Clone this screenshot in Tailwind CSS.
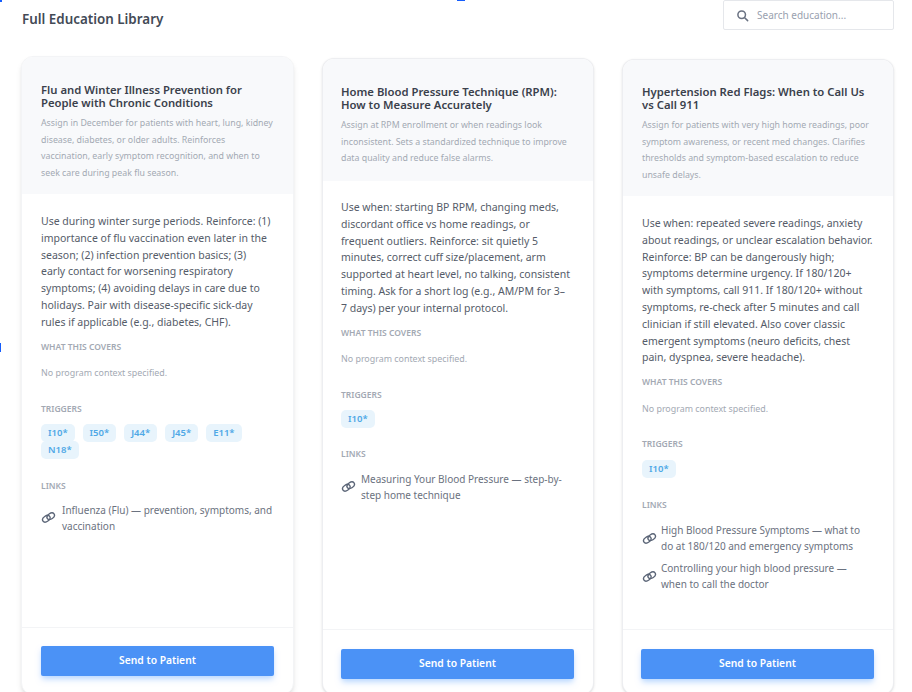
<!DOCTYPE html>
<html lang="en">
<head>
  <meta charset="UTF-8" />
  <title>Full Education Library</title>
  <script src="https://cdn.jsdelivr.net/npm/@tailwindcss/browser@4"></script>
</head>
<body class="bg-white text-gray-700 font-['Noto_Sans',sans-serif] h-[692px] overflow-hidden relative">
  <!-- stray focus marks at the screenshot edges -->
  <div class="absolute left-0 top-0 w-[2px] h-[2px] bg-blue-600"></div>
  <div class="absolute left-[457px] top-0 w-[8px] h-[1px] bg-blue-600"></div>
  <div class="absolute left-0 top-[343px] w-[1px] h-[9px] bg-blue-600"></div>

  <header class="flex justify-between items-start pl-[22px] pr-[18px] h-[56px]">
    <h1 class="mt-[10px] text-[13.4px] leading-[19px] font-semibold text-[#434a56]">Full Education Library</h1>
    <div class="flex items-center w-[171px] h-[30px] bg-white border border-gray-200 rounded-[2px] pl-[12px] gap-[8px]">
      <svg class="w-[13px] h-[13px] text-gray-500" viewBox="0 0 24 24" fill="none" stroke="currentColor" stroke-width="2.8" stroke-linecap="round"><circle cx="10.5" cy="10.5" r="7"/><path d="M16 16l5.5 5.5"/></svg>
      <span class="text-[10px] text-gray-400">Search education...</span>
    </div>
  </header>

  <main class="grid grid-cols-[273px_272px_272px] gap-x-[28px] pl-[21px] items-start">
    <!-- Card 1 -->
    <article class="h-[639px] flex flex-col bg-white border border-gray-100 rounded-xl shadow-md overflow-hidden">
      <div class="h-[137px] bg-[#f8f9fb] pt-[26px] px-[19px]">
        <h2 class="text-[11.3px] leading-[13px] font-semibold text-[#3b414c]">Flu and Winter Illness Prevention for People with Chronic Conditions</h2>
        <p class="mt-[6px] text-[8.8px] leading-[16.5px] text-[#a3a9b3] whitespace-nowrap">Assign in December for patients with heart, lung, kidney<br>disease, diabetes, or older adults. Reinforces<br>vaccination, early symptom recognition, and when to<br>seek care during peak flu season.</p>
      </div>
      <div class="flex-1 px-[19px] pt-[19px]">
        <p class="text-[10.5px] leading-[16.8px] text-[#555c69] whitespace-nowrap">Use during winter surge periods. Reinforce: (1)<br>importance of flu vaccination even later in the<br>season; (2) infection prevention basics; (3)<br>early contact for worsening respiratory<br>symptoms; (4) avoiding delays in care due to<br>holidays. Pair with disease-specific sick-day<br>rules if applicable (e.g., diabetes, CHF).</p>
        <h3 class="mt-[9px] text-[8.5px] leading-[13px] font-semibold uppercase text-[#a3a9b3]">What this covers</h3>
        <p class="mt-[13px] text-[8.9px] leading-[14px] text-[#a3a9b3]">No program context specified.</p>
        <h3 class="mt-[22px] text-[8.5px] leading-[13px] font-semibold uppercase text-[#a3a9b3]">Triggers</h3>
        <div class="mt-[9px] flex flex-wrap gap-x-[8px] w-[215px]">
          <span class="h-[18px] px-[7px] rounded-[5px] bg-[#e8f4fc] text-[9.5px] leading-[18px] font-semibold text-[#4fa8e6]">I10*</span>
          <span class="h-[18px] px-[7px] rounded-[5px] bg-[#e8f4fc] text-[9.5px] leading-[18px] font-semibold text-[#4fa8e6]">I50*</span>
          <span class="h-[18px] px-[7px] rounded-[5px] bg-[#e8f4fc] text-[9.5px] leading-[18px] font-semibold text-[#4fa8e6]">J44*</span>
          <span class="h-[18px] px-[7px] rounded-[5px] bg-[#e8f4fc] text-[9.5px] leading-[18px] font-semibold text-[#4fa8e6]">J45*</span>
          <span class="h-[18px] px-[7px] rounded-[5px] bg-[#e8f4fc] text-[9.5px] leading-[18px] font-semibold text-[#4fa8e6]">E11*</span>
          <span class="h-[18px] px-[7px] -mt-px rounded-[5px] bg-[#e8f4fc] text-[9.5px] leading-[18px] font-semibold text-[#4fa8e6]">N18*</span>
        </div>
        <h3 class="mt-[20px] text-[8.5px] leading-[13px] font-semibold uppercase text-[#a3a9b3]">Links</h3>
        <div class="mt-[10px] flex items-center gap-[6px] text-[10px] leading-[16px] text-[#6b7280] whitespace-nowrap">
          <svg class="w-[15px] h-[15px] shrink-0 text-[#5b6577]" viewBox="0 0 24 24" fill="none" stroke="currentColor" stroke-width="2.2" stroke-linecap="round"><ellipse cx="8.5" cy="14" rx="6.5" ry="4.5" transform="rotate(-35 8.5 14)"/><ellipse cx="15.5" cy="10" rx="6.5" ry="4.5" transform="rotate(-35 15.5 10)"/></svg>
          <span>Influenza (Flu) — prevention, symptoms, and<br>vaccination</span>
        </div>
      </div>
      <div class="h-[67px] border-t border-gray-100 px-[19px] pt-[18px]">
        <button class="w-full h-[30px] rounded-[2px] bg-[#4b92f6] shadow-md shadow-blue-200 text-[10.3px] font-semibold text-white">Send to Patient</button>
      </div>
    </article>

    <!-- Card 2 -->
    <article class="mt-[2px] h-[637px] flex flex-col bg-white border border-gray-200/70 rounded-xl shadow-sm overflow-hidden">
      <div class="h-[122px] bg-[#f8f9fb] pt-[26px] px-[18px]">
        <h2 class="text-[11.3px] leading-[13px] font-semibold text-[#3b414c]">Home Blood Pressure Technique (RPM): How to Measure Accurately</h2>
        <p class="mt-[6px] text-[8.8px] leading-[16.5px] text-[#a3a9b3]">Assign at RPM enrollment or when readings look inconsistent. Sets a standardized technique to improve data quality and reduce false alarms.</p>
      </div>
      <div class="flex-1 px-[18px] pt-[18px]">
        <p class="text-[10.5px] leading-[16.8px] text-[#555c69] whitespace-nowrap">Use when: starting BP RPM, changing meds,<br>discordant office vs home readings, or<br>frequent outliers. Reinforce: sit quietly 5<br>minutes, correct cuff size/placement, arm<br>supported at heart level, no talking, consistent<br>timing. Ask for a short log (e.g., AM/PM for 3–<br>7 days) per your internal protocol.</p>
        <h3 class="mt-[9px] text-[8.5px] leading-[13px] font-semibold uppercase text-[#a3a9b3]">What this covers</h3>
        <p class="mt-[13px] text-[8.9px] leading-[14px] text-[#a3a9b3]">No program context specified.</p>
        <h3 class="mt-[22px] text-[8.5px] leading-[13px] font-semibold uppercase text-[#a3a9b3]">Triggers</h3>
        <div class="mt-[9px] flex flex-wrap gap-x-[8px]">
          <span class="h-[18px] px-[7px] rounded-[5px] bg-[#e8f4fc] text-[9.5px] leading-[18px] font-semibold text-[#4fa8e6]">I10*</span>
        </div>
        <h3 class="mt-[19px] text-[8.5px] leading-[13px] font-semibold uppercase text-[#a3a9b3]">Links</h3>
        <div class="mt-[11px] flex items-center gap-[5px] text-[10px] leading-[16px] text-[#6b7280]">
          <svg class="w-[15px] h-[15px] shrink-0 text-[#5b6577]" viewBox="0 0 24 24" fill="none" stroke="currentColor" stroke-width="2.2" stroke-linecap="round"><ellipse cx="8.5" cy="14" rx="6.5" ry="4.5" transform="rotate(-35 8.5 14)"/><ellipse cx="15.5" cy="10" rx="6.5" ry="4.5" transform="rotate(-35 15.5 10)"/></svg>
          <span>Measuring Your Blood Pressure — step-by-step home technique</span>
        </div>
      </div>
      <div class="h-[65px] border-t border-gray-100 pl-[18px] pr-[19px] pt-[19px]">
        <button class="w-full h-[30px] rounded-[2px] bg-[#4b92f6] shadow-md shadow-blue-200 text-[10.3px] font-semibold text-white">Send to Patient</button>
      </div>
    </article>

    <!-- Card 3 -->
    <article class="mt-[3px] h-[636px] flex flex-col bg-white border border-gray-200/70 rounded-xl shadow-sm overflow-hidden">
      <div class="h-[136px] bg-[#f8f9fb] pt-[25px] px-[19px]">
        <h2 class="text-[11.3px] leading-[13px] font-semibold text-[#3b414c]">Hypertension Red Flags: When to Call Us vs Call 911</h2>
        <p class="mt-[6px] text-[8.8px] leading-[16.5px] text-[#a3a9b3]">Assign for patients with very high home readings, poor symptom awareness, or recent med changes. Clarifies thresholds and symptom-based escalation to reduce unsafe delays.</p>
      </div>
      <div class="flex-1 px-[19px] pt-[19px]">
        <p class="text-[10.5px] leading-[16.8px] text-[#555c69] whitespace-nowrap">Use when: repeated severe readings, anxiety<br>about readings, or unclear escalation behavior.<br>Reinforce: BP can be dangerously high;<br>symptoms determine urgency. If 180/120+<br>with symptoms, call 911. If 180/120+ without<br>symptoms, re-check after 5 minutes and call<br>clinician if still elevated. Also cover classic<br>emergent symptoms (neuro deficits, chest<br>pain, dyspnea, severe headache).</p>
        <h3 class="mt-[9px] text-[8.5px] leading-[13px] font-semibold uppercase text-[#a3a9b3]">What this covers</h3>
        <p class="mt-[14px] text-[8.9px] leading-[14px] text-[#a3a9b3]">No program context specified.</p>
        <h3 class="mt-[21px] text-[8.5px] leading-[13px] font-semibold uppercase text-[#a3a9b3]">Triggers</h3>
        <div class="mt-[10px] flex flex-wrap gap-x-[8px]">
          <span class="h-[18px] px-[7px] rounded-[5px] bg-[#e8f4fc] text-[9.5px] leading-[18px] font-semibold text-[#4fa8e6]">I10*</span>
        </div>
        <h3 class="mt-[20px] text-[8.5px] leading-[13px] font-semibold uppercase text-[#a3a9b3]">Links</h3>
        <div class="mt-[11px] flex items-center gap-[4px] text-[10px] leading-[16px] text-[#6b7280]">
          <svg class="w-[15px] h-[15px] shrink-0 text-[#5b6577]" viewBox="0 0 24 24" fill="none" stroke="currentColor" stroke-width="2.2" stroke-linecap="round"><ellipse cx="8.5" cy="14" rx="6.5" ry="4.5" transform="rotate(-35 8.5 14)"/><ellipse cx="15.5" cy="10" rx="6.5" ry="4.5" transform="rotate(-35 15.5 10)"/></svg>
          <span>High Blood Pressure Symptoms — what to do at 180/120 and emergency symptoms</span>
        </div>
        <div class="mt-[6px] flex items-center gap-[4px] text-[10px] leading-[16px] text-[#6b7280]">
          <svg class="w-[15px] h-[15px] shrink-0 text-[#5b6577]" viewBox="0 0 24 24" fill="none" stroke="currentColor" stroke-width="2.2" stroke-linecap="round"><ellipse cx="8.5" cy="14" rx="6.5" ry="4.5" transform="rotate(-35 8.5 14)"/><ellipse cx="15.5" cy="10" rx="6.5" ry="4.5" transform="rotate(-35 15.5 10)"/></svg>
          <span>Controlling your high blood pressure — when to call the doctor</span>
        </div>
      </div>
      <div class="h-[65px] border-t border-gray-100 pl-[18px] pr-[19px] pt-[19px]">
        <button class="w-full h-[30px] rounded-[2px] bg-[#4b92f6] shadow-md shadow-blue-200 text-[10.3px] font-semibold text-white">Send to Patient</button>
      </div>
    </article>
  </main>
</body>
</html>
